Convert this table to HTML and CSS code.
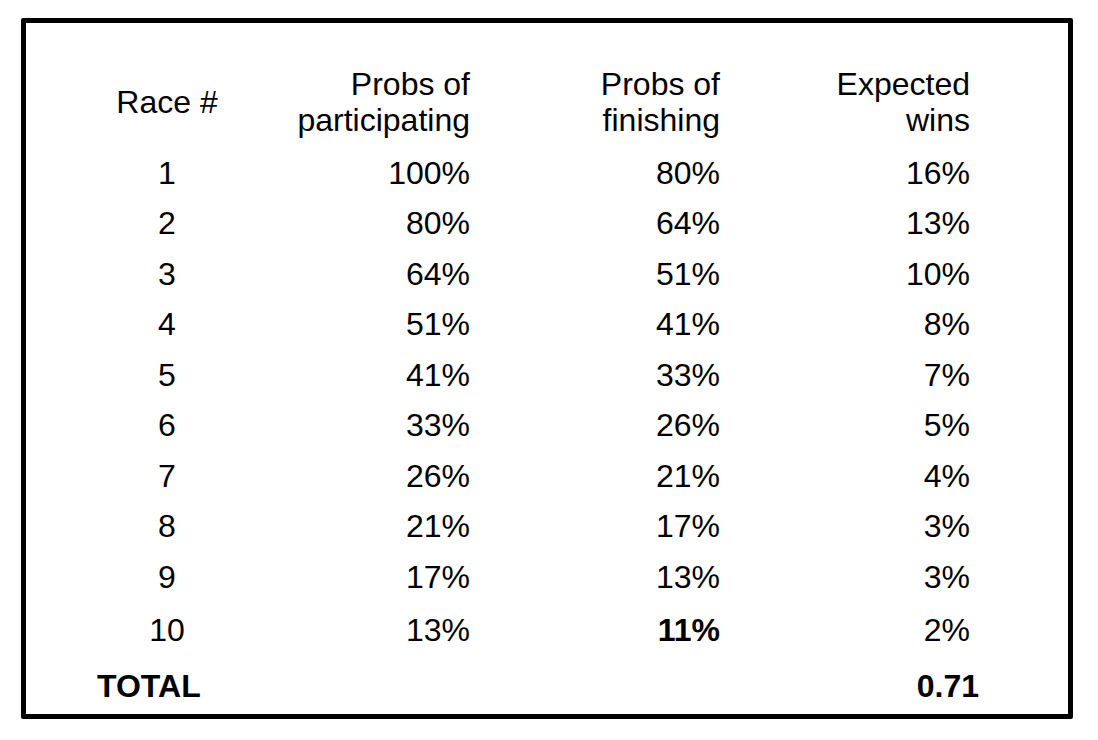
FILE: index.html
```html
<!DOCTYPE html>
<html>
<head>
<meta charset="utf-8">
<link rel="stylesheet" href="styles.css">
</head>
<body>
<div class="frame">
  <div class="table">
    <div class="head center single">Race #</div>
    <div class="head">Probs of<br>participating</div>
    <div class="head">Probs of<br>finishing</div>
    <div class="head">Expected<br>wins</div>

    <div class="cell center">1</div><div class="cell">100%</div><div class="cell">80%</div><div class="cell">16%</div>
    <div class="cell center">2</div><div class="cell">80%</div><div class="cell">64%</div><div class="cell">13%</div>
    <div class="cell center">3</div><div class="cell">64%</div><div class="cell">51%</div><div class="cell">10%</div>
    <div class="cell center">4</div><div class="cell">51%</div><div class="cell">41%</div><div class="cell">8%</div>
    <div class="cell center">5</div><div class="cell">41%</div><div class="cell">33%</div><div class="cell">7%</div>
    <div class="cell center">6</div><div class="cell">33%</div><div class="cell">26%</div><div class="cell">5%</div>
    <div class="cell center">7</div><div class="cell">26%</div><div class="cell">21%</div><div class="cell">4%</div>
    <div class="cell center">8</div><div class="cell">21%</div><div class="cell">17%</div><div class="cell">3%</div>
    <div class="cell center">9</div><div class="cell">17%</div><div class="cell">13%</div><div class="cell">3%</div>
    <div class="cell center last">10</div><div class="cell last">13%</div><div class="cell last bold">11%</div><div class="cell last">2%</div>

    <div class="cell total bold left">TOTAL</div><div class="cell total"></div><div class="cell total"></div><div class="cell total bold shift">0.71</div>
  </div>
</div>
</body>
</html>
```

FILE: styles.css
```css
html, body {
  margin: 0;
  padding: 0;
  background: #ffffff;
}

body {
  font-family: "Liberation Sans", Arial, Helvetica, sans-serif;
  color: #000000;
}

.frame {
  box-sizing: border-box;
  margin: 18px 0 0 21px;
  width: 1052px;
  height: 701px;
  border: 5px solid #000000;
  border-radius: 2px;
  padding: 43px 0 0 71px;
}

.table {
  display: grid;
  grid-template-columns: 140px 233px 250px 250px;
  font-size: 32px;
}

.head {
  text-align: right;
  line-height: 36px;
  margin-bottom: 9.7px;
}

.head.single {
  display: flex;
  align-items: center;
  justify-content: center;
}

.cell {
  text-align: right;
  height: 50.5px;
  line-height: 50.5px;
  white-space: nowrap;
}

.center {
  text-align: center;
}

.left {
  text-align: left;
}

.bold {
  font-weight: bold;
}

.last {
  padding-top: 3px;
}

.total {
  margin-top: 5.5px;
}

.shift {
  margin-right: -9px;
}
```
